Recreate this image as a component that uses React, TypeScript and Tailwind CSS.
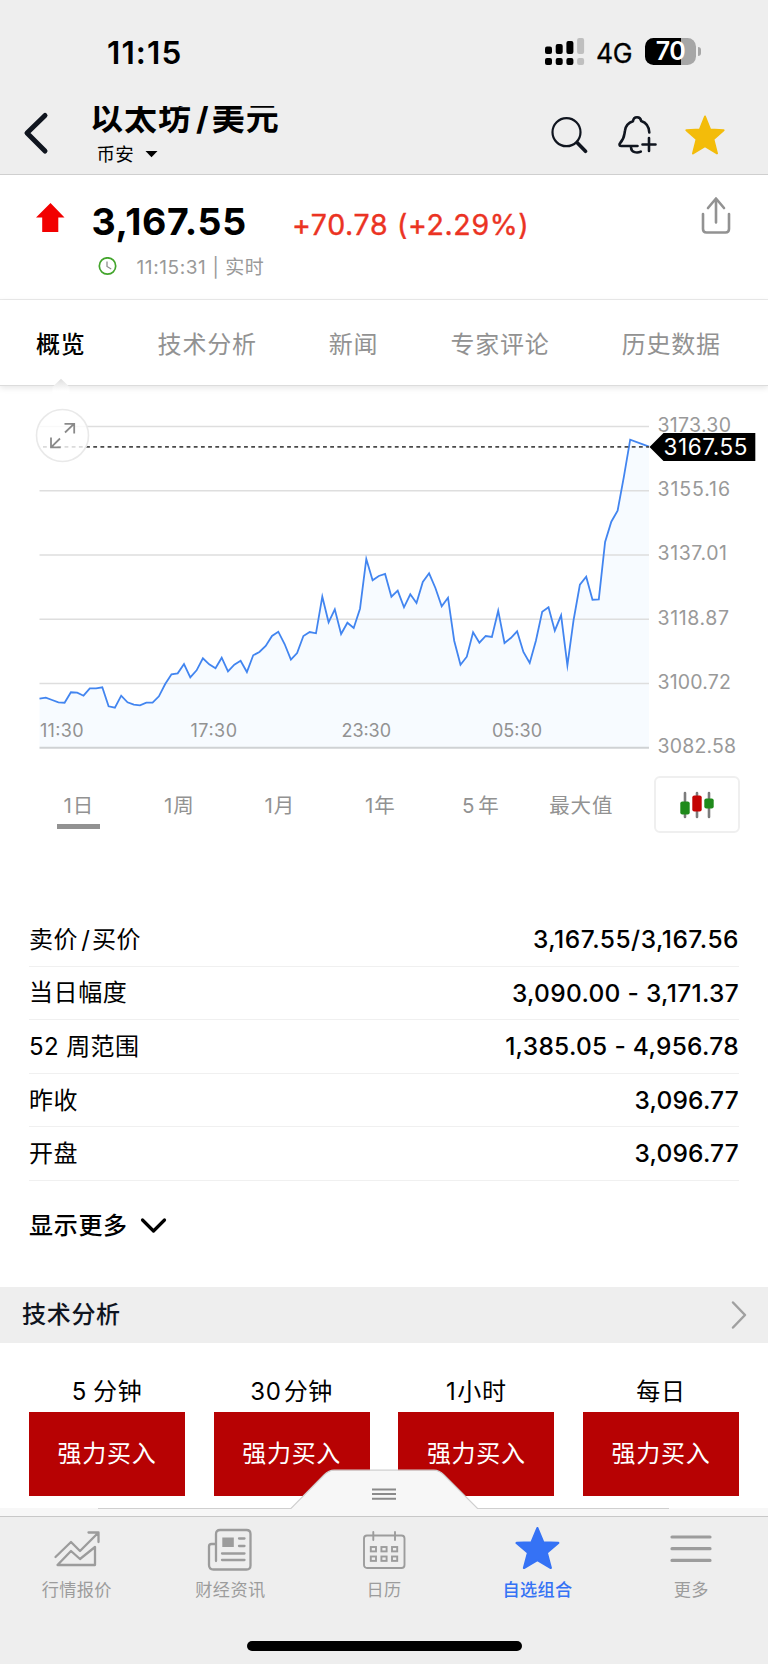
import React from "react";

const LINE = [
  896, 893, 900, 907, 908, 877, 878, 887, 865, 865, 862, 919, 923, 887, 907, 914, 916, 908, 908, 889, 852, 823, 820, 792,
  832, 811, 775, 793, 805, 773, 814, 794, 782, 816, 766, 756, 738, 708, 695, 732, 779, 759, 708, 696, 700, 590, 667, 628,
  702, 668, 684, 626, 477, 541, 528, 522, 590, 572, 622, 583, 609, 546, 520, 564, 619, 593, 722, 794, 770, 697, 728, 708,
  711, 632, 729, 714, 694, 756, 789, 722, 635, 622, 692, 646, 796, 660, 554, 530, 599, 598, 426, 365, 332, 230, 119,
];
const POINTS = [...LINE.map((v, i) => [39.5 + i * 6.284, v / 3 + 10]), [649, 56.7]]
  .map(([x, y]) => `${x.toFixed(1)},${y.toFixed(1)}`)
  .join(" ");

const STAR = "M20 1.5 L25.2 14.6 L38.6 15.2 L28.4 24.3 L32 38.4 L20 31.2 L8 38.4 L11.6 24.3 L1.4 15.2 L14.8 14.6 Z";

function StatusBar() {
  return (
    <div className="flex h-[104px] items-start">
      <div className="ml-[107px] mt-[33px] w-[438px] text-[31.5px] font-semibold leading-[40px] tracking-[1.1px]">11:15</div>
      <svg className="mt-[38px] h-[28px] w-[40px]" viewBox="0 0 40 28">
        {[8.5, 6, 3, 0].map((y, i) => (
          <g key={i} fill={i === 3 ? "#bfbfbf" : "#000"}>
            <rect x={i * 10.7} y={y} width="7" height={16 - y} rx="2" />
            <rect x={i * 10.7} y="20" width="7" height="7" rx="2" />
          </g>
        ))}
      </svg>
      <div className="ml-[11px] mt-[33px] w-[49px] text-[26.5px] leading-[40px] tracking-[-0.4px]" style={{ WebkitTextStroke: "0.3px #000" }}>4G</div>
      <div className="mt-[38px] flex items-center">
        <div className="flex h-[27px] w-[51px] items-center justify-center rounded-[8.5px] bg-[linear-gradient(90deg,#000_70%,#a6a6a6_70%)] pb-[1px] text-[25px] font-semibold leading-[27px] tracking-[-0.5px] text-white">
          70
        </div>
        <div className="ml-[1.5px] h-[9px] w-[3px] rounded-r-full bg-[#a6a6a6]" />
      </div>
    </div>
  );
}

function Header() {
  return (
    <div className="flex h-[71px] items-start border-b border-[#cfcfcf]">
      <svg className="ml-[19px] mt-[6px] h-[46px] w-[32px]" viewBox="0 0 32 46" fill="none" stroke="#10151f" strokeWidth="5" strokeLinecap="round" strokeLinejoin="round">
        <path d="M26 5.5 L8 23 L26 41" />
      </svg>
      <div className="ml-[39px] w-[460px]">
        <div className="mt-[2px] flex h-[31px] items-start overflow-hidden text-[33px] font-bold leading-[25px] tracking-[1px]">
          <span>以太坊</span>
          <span className="ml-[4px] mr-[2px]">/</span>
          <span>美元</span>
        </div>
        <div className="ml-[6.5px] mt-[2px] flex items-center text-[18.5px] leading-[30px] tracking-[0.3px]">
          币安
          <svg className="ml-[10.5px] h-[8px] w-[13px]" viewBox="0 0 13 8">
            <path d="M0.5 1 H12.5 L6.5 7.3 Z" />
          </svg>
        </div>
      </div>
      <svg className="-ml-[0.5px] mt-[12px] h-[38px] w-[38px]" viewBox="550 116 38 38" fill="none" stroke="#10151f" strokeLinecap="round">
        <circle cx="566.5" cy="132.2" r="14" strokeWidth="2.2" />
        <path d="M577.5 143 L585.5 151.3" strokeWidth="3.6" />
      </svg>
      <svg className="ml-[28px] mt-[10px] h-[42px] w-[42px]" viewBox="616 114 42 42" fill="none" stroke="#10151f" strokeWidth="2.6" strokeLinecap="round" strokeLinejoin="round">
        <path d="M637.5 146 H621 C619 146 619.2 144 620.2 143 C624.5 138.5 624 136 625 130.5 C625.6 126 629 122.5 633 121.2 C633.6 116 640.4 116 641.2 121 C646 122.6 649 126 649.3 132.5" />
        <path d="M631 147.5 C631.3 152.5 637 153.5 640.8 151.6" />
        <path d="M649 138 V151 M642.5 144.5 H655.5" />
      </svg>
      <svg className="ml-[27.5px] mt-[11px] h-[40px] w-[40px]" viewBox="0 0 40 40">
        <path d={STAR} fill="#f3bc0a" stroke="#f3bc0a" strokeWidth="2" strokeLinejoin="round" />
      </svg>
    </div>
  );
}

function Quote() {
  return (
    <div className="flex h-[125px] items-start border-b border-[#ebebeb]">
      <svg className="ml-[36px] mt-[28px] h-[30px] w-[29px]" viewBox="0 0 29 30">
        <path d="M14.5 0 L28.5 14.5 H22.3 V29 H6.2 V14.5 H0 Z" fill="#f20000" />
      </svg>
      <div className="ml-[26px] w-[610px]">
        <div className="mt-[24px] flex h-[46px] items-center">
          <span className="w-[201px] pl-[0.5px] text-[37.5px] font-bold leading-[46px] tracking-[0.6px]">3,167.55</span>
          <span className="mt-[5px] whitespace-nowrap text-[28.5px] leading-[40px] tracking-[0.65px] text-[#eb3323]" style={{ WebkitTextStroke: "0.4px #eb3323" }}>+70.78 (+2.29%)</span>
        </div>
        <div className="mt-[7.5px] flex items-center text-[19px] leading-[30px] tracking-[0.6px] text-[#999]">
          <svg className="-mt-[2px] ml-[6.5px] mr-[20px] h-[19px] w-[19px]" viewBox="0 0 19 19" fill="none">
            <circle cx="9.5" cy="9" r="8.2" stroke="#43a52c" strokeWidth="1.7" />
            <path d="M9 4.5 V9.5 L13.2 12" stroke="#8e8e8e" strokeWidth="1.3" />
          </svg>
          11:15:31 | 实时
        </div>
      </div>
      <svg className="mt-[20px] h-[40px] w-[30px]" viewBox="701 195 30 40" fill="none" stroke="#929292" strokeWidth="2.6" strokeLinecap="round" strokeLinejoin="round">
        <path d="M703 214 V229 Q703 232.5 706.5 232.5 H725.5 Q729 232.5 729 229 V214 M716 222.5 V198.5 M708 208 L716 198.5 L724 208" />
      </svg>
    </div>
  );
}

function Tabs() {
  return (
    <div className="relative flex h-[86px] items-center gap-[72px] whitespace-nowrap border-b border-[#dcdcdc] pl-[36px] pt-[5px] text-[24px] tracking-[0.8px] text-[#929292] shadow-[0_2px_6px_rgba(0,0,0,0.1)]">
      <span className="font-medium text-black">概览</span>
      <span>技术分析</span>
      <span>新闻</span>
      <span>专家评论</span>
      <span>历史数据</span>
      <svg className="absolute left-[51px] top-[78px] h-[18px] w-[20px]" viewBox="0 0 20 18">
        <defs>
          <linearGradient id="notch" x1="0" y1="0" x2="0" y2="1">
            <stop offset="0" stopColor="#dedede" />
            <stop offset="0.75" stopColor="#fff" />
          </linearGradient>
        </defs>
        <path d="M1.5 9 L10 0.8 L18.5 9 V17 H1.5 Z" fill="url(#notch)" />
      </svg>
    </div>
  );
}

const AXIS = ["3173.30", "3155.16", "3137.01", "3118.87", "3100.72", "3082.58"];
const AXIS_W = [72, 71, 68, 70, 72, 77];
const TIMES: [string, number, number][] = [
  ["11:30", 40, 43],
  ["17:30", 190.5, 46],
  ["23:30", 341.5, 49],
  ["05:30", 492, 49.5],
];

function Chart() {
  return (
    <svg className="block h-[374px] w-[768px]" viewBox="0 0 768 374">
      <g fill="#999">
        {AXIS.map((t, i) => (
          <text key={t} x="657.5" y={41.5 + i * 64.35} fontSize="19.5" textLength={AXIS_W[i] + 1.5}>{t}</text>
        ))}
      </g>
      <polygon points={`39.5,357 ${POINTS} 649,357`} fill="#f7fbff" />
      {[0, 1, 2, 3, 4].map((i) => (
        <path key={i} d={`M39.5 ${36.4 + i * 64.3} H649`} stroke="#dedede" strokeWidth="1.5" />
      ))}
      <path d="M39.5 357.8 H649" stroke="#cfd2d4" strokeWidth="2" />
      <polyline points={POINTS} fill="none" stroke="#4285f0" strokeWidth="1.8" strokeMiterlimit="10" />
      <path d="M43 56.9 H649" stroke="#4a4a4a" strokeWidth="1.8" strokeDasharray="3.8 3.38" />
      <g fill="#929292">
        {TIMES.map(([t, x, w]) => (
          <text key={t} x={x} y="347" fontSize="18" textLength={w + 0.5}>{t}</text>
        ))}
      </g>
      <circle cx="62.5" cy="45.5" r="26" fill="#fff" fillOpacity="0.8" stroke="#e9e9e9" strokeWidth="1.6" />
      <path d="M65 42.5 L74 33.8 M64.5 33.8 H74.2 V43.5 M60 48.5 L51 57.3 M51 47.5 V57.3 H60.7" fill="none" stroke="#8a8a8a" strokeWidth="1.8" />
      <path d="M649.5 57 L663.5 43 H755.3 V71 H663.5 Z" />
      <text x="663.5" y="65" fontSize="22.5" fill="#fff" textLength="84">3167.55</text>
    </svg>
  );
}

function Ranges() {
  return (
    <div className="mt-[12px] flex h-[58px] pl-[28.5px]">
      {["1日", "1周", "1月", "1年", "5 年", "最大值"].map((t, i) => (
        <div key={t} className="flex w-[100.5px] flex-col items-center text-[20.5px] leading-[30px] text-[#929292]">
          <span className="mt-[14.5px] whitespace-nowrap tracking-[0.8px]">
            {t === "5 年" ? <>5<span className="inline-block w-[3px]" />年</> : t}
          </span>
          {i === 0 && <span className="mt-[3.5px] h-[4.5px] w-[43px] bg-[#929292]" />}
        </div>
      ))}
      <div className="ml-[22px] flex h-[57px] w-[86px] items-center justify-center rounded-[6px] border-2 border-[#efefef]">
        <svg className="h-[28px] w-[36px]" viewBox="0 0 36 28">
          <path d="M6 2 V26 M18 2 V26 M30 2 V26" stroke="#7c7c7c" strokeWidth="2.6" strokeLinecap="round" />
          <rect x="1.3" y="10.5" width="9.4" height="13" rx="2" fill="#1f8a1b" />
          <rect x="13.3" y="4.5" width="9.4" height="16" rx="2" fill="#c40404" />
          <rect x="25.3" y="7.5" width="9.4" height="10" rx="2" fill="#1f8a1b" />
        </svg>
      </div>
    </div>
  );
}

const ROWS: [React.ReactNode, string, string][] = [
  [<>卖价<span className="ml-[3px] mr-[1.5px]">/</span>买价</>, "3,167.55/3,167.56", "tracking-[0.5px]"],
  ["当日幅度", "3,090.00 - 3,171.37", "tracking-[0.3px]"],
  ["52 周范围", "1,385.05 - 4,956.78", "tracking-[0.3px]"],
  ["昨收", "3,096.77", "tracking-[0.2px]"],
  ["开盘", "3,096.77", "tracking-[0.2px]"],
];

function Details() {
  return (
    <div className="mt-[79px] px-[29px]">
      {ROWS.map(([k, v, spacing], i) => (
        <div key={i} className="flex h-[53.6px] items-center justify-between border-b border-[#f0f0f0] text-[24px]">
          <span className={i === 2 ? "pt-[1px] tracking-[0.4px]" : "pt-[1px] tracking-[0.6px]"}>{k}</span>
          <span className={`whitespace-nowrap text-[24.5px] font-medium ${spacing}`}>{v}</span>
        </div>
      ))}
      <div className="flex h-[106px] items-center pb-[16px] text-[24px] font-medium tracking-[0.7px]">
        显示更多
        <svg className="ml-[12px] h-[17px] w-[27px]" viewBox="0 0 27 17" fill="none" stroke="#000" strokeWidth="3.2" strokeLinecap="round" strokeLinejoin="round">
          <path d="M2.5 3 L13.5 14 L24.5 3" />
        </svg>
      </div>
    </div>
  );
}

function Technical() {
  const items: [string, string, string][] = [
    ["5", "mr-[6px]", "分钟"],
    ["30", "mr-[2px]", "分钟"],
    ["1", "mr-[1px]", "小时"],
    ["", "", "每日"],
  ];
  return (
    <>
      <div className="flex h-[56px] items-center justify-between bg-[#eee] pl-[22px] pr-[21px] text-[24px] font-medium tracking-[0.7px] text-[#10151f]">
        技术分析
        <svg className="h-[30px] w-[16px]" viewBox="0 0 16 30" fill="none" stroke="#a0a0a0" strokeWidth="2.5" strokeLinecap="round" strokeLinejoin="round">
          <path d="M2 2.5 L14 15 L2 27.5" />
        </svg>
      </div>
      <div className="grid h-[165px] grid-cols-4 gap-x-[28.6px] px-[29px] pt-[29px]">
        {items.map(([n, gap, t], i) => (
          <div key={i} className="text-center text-[24px] tracking-[0.7px]">
            <div className="h-[40px] leading-[40px]">
              {n && <span className={gap}>{n}</span>}
              {t}
            </div>
            <div className="flex h-[84px] items-center justify-center bg-[#b70203] pt-[1px] text-white">强力买入</div>
          </div>
        ))}
      </div>
    </>
  );
}

function Drawer() {
  return (
    <div className="relative h-[8px] bg-[#f7f7f7]">
      <svg className="absolute left-0 top-[-40px] h-[48px] w-[768px]" viewBox="0 0 768 48" fill="none">
        <path d="M291 40.5 L324 7 Q329 2.2 334 2.2 H434 Q439 2.2 444 7 L477.5 40.5 V48 H291 Z" fill="#f7f7f7" />
        <path d="M98 40.5 H291 L324 7 Q329 2.2 334 2.2 H434 Q439 2.2 444 7 L477.5 40.5 H669" stroke="#cfcfcf" strokeWidth="1.2" />
        <path d="M372 21.5 H396 M372 26 H396 M372 30.7 H396" stroke="#8a8a8a" strokeWidth="2" />
      </svg>
    </div>
  );
}

function NavItem({ label, active, children }: { label: string; active?: boolean; children: React.ReactNode }) {
  return (
    <div className={active ? "flex flex-col items-center text-[#3572f5]" : "flex flex-col items-center text-[#9c9c9c]"}>
      <svg className="mt-[10.5px] h-[46px] w-[48px]" viewBox="0 0 48 46" fill="none" stroke="currentColor" strokeWidth="2.3" strokeLinecap="round" strokeLinejoin="round">
        {children}
      </svg>
      <span className={active ? "mt-[4px] text-[17.2px] font-medium leading-[26px] tracking-[0.3px]" : "mt-[4px] text-[17.2px] leading-[26px] tracking-[0.35px]"}>
        {label}
      </span>
    </div>
  );
}

function TabBar() {
  return (
    <div className="flex h-[148px] flex-col border-t border-[#c8c8c8] bg-[#eee]">
      <div className="grid h-[123px] grid-cols-5">
        <NavItem label="行情报价">
          <path d="M2.5 30 L18 15 L27 24 L45 6 M35.5 5.5 H45.5 V15 M4.5 38 L18 24 L27 32 L42 20 V38 Z" />
        </NavItem>
        <NavItem label="财经资讯">
          <path d="M10 34 V7 Q10 3 14 3 H40.5 Q44.5 3 44.5 7 V38.5 Q44.5 42.5 40.5 42.5 H7.5 Q3 42.5 3 38 V19.5 Q3 17 5.5 17 H9.5" />
          <path d="M16 26.5 H38.5 M16 33 H38.5 M33 11.5 H38.5 M33 19 H38.5" />
          <rect x="16.3" y="10.5" width="11.5" height="9.5" fill="currentColor" stroke="none" />
        </NavItem>
        <NavItem label="日历">
          <rect x="4" y="8.5" width="40.5" height="32.5" rx="3" strokeWidth="1.9" />
          <path d="M13.3 5 V13 M35 5 V13" strokeWidth="1.9" />
          {[0, 1, 2].map((c) => (
            <g key={c} strokeWidth="1.9" strokeLinejoin="miter">
              <rect x={10.8 + c * 10.6} y="20" width="5.2" height="4.4" />
              <rect x={10.8 + c * 10.6} y="29.5" width="5.2" height="4.4" />
            </g>
          ))}
        </NavItem>
        <NavItem label="自选组合" active>
          <g transform="translate(1,-0.5) scale(1.12 1.08)">
            <path d={STAR} fill="currentColor" strokeWidth="2" />
          </g>
        </NavItem>
        <NavItem label="更多">
          <path d="M5 10 H43 M5 21.7 H43 M5 33.4 H43" strokeWidth="3.2" />
        </NavItem>
      </div>
      <div className="mx-auto mt-[1px] h-[10px] w-[275px] rounded-full bg-black" />
    </div>
  );
}

export default function App() {
  return (
    <div className="h-[1665px] w-[768px] overflow-hidden bg-white font-['Inter','Noto_Sans_CJK_SC',sans-serif] text-black">
      <div className="bg-[#eee]">
        <StatusBar />
        <Header />
      </div>
      <Quote />
      <Tabs />
      <div className="h-[4px]" />
      <Chart />
      <Ranges />
      <Details />
      <Technical />
      <Drawer />
      <TabBar />
    </div>
  );
}
